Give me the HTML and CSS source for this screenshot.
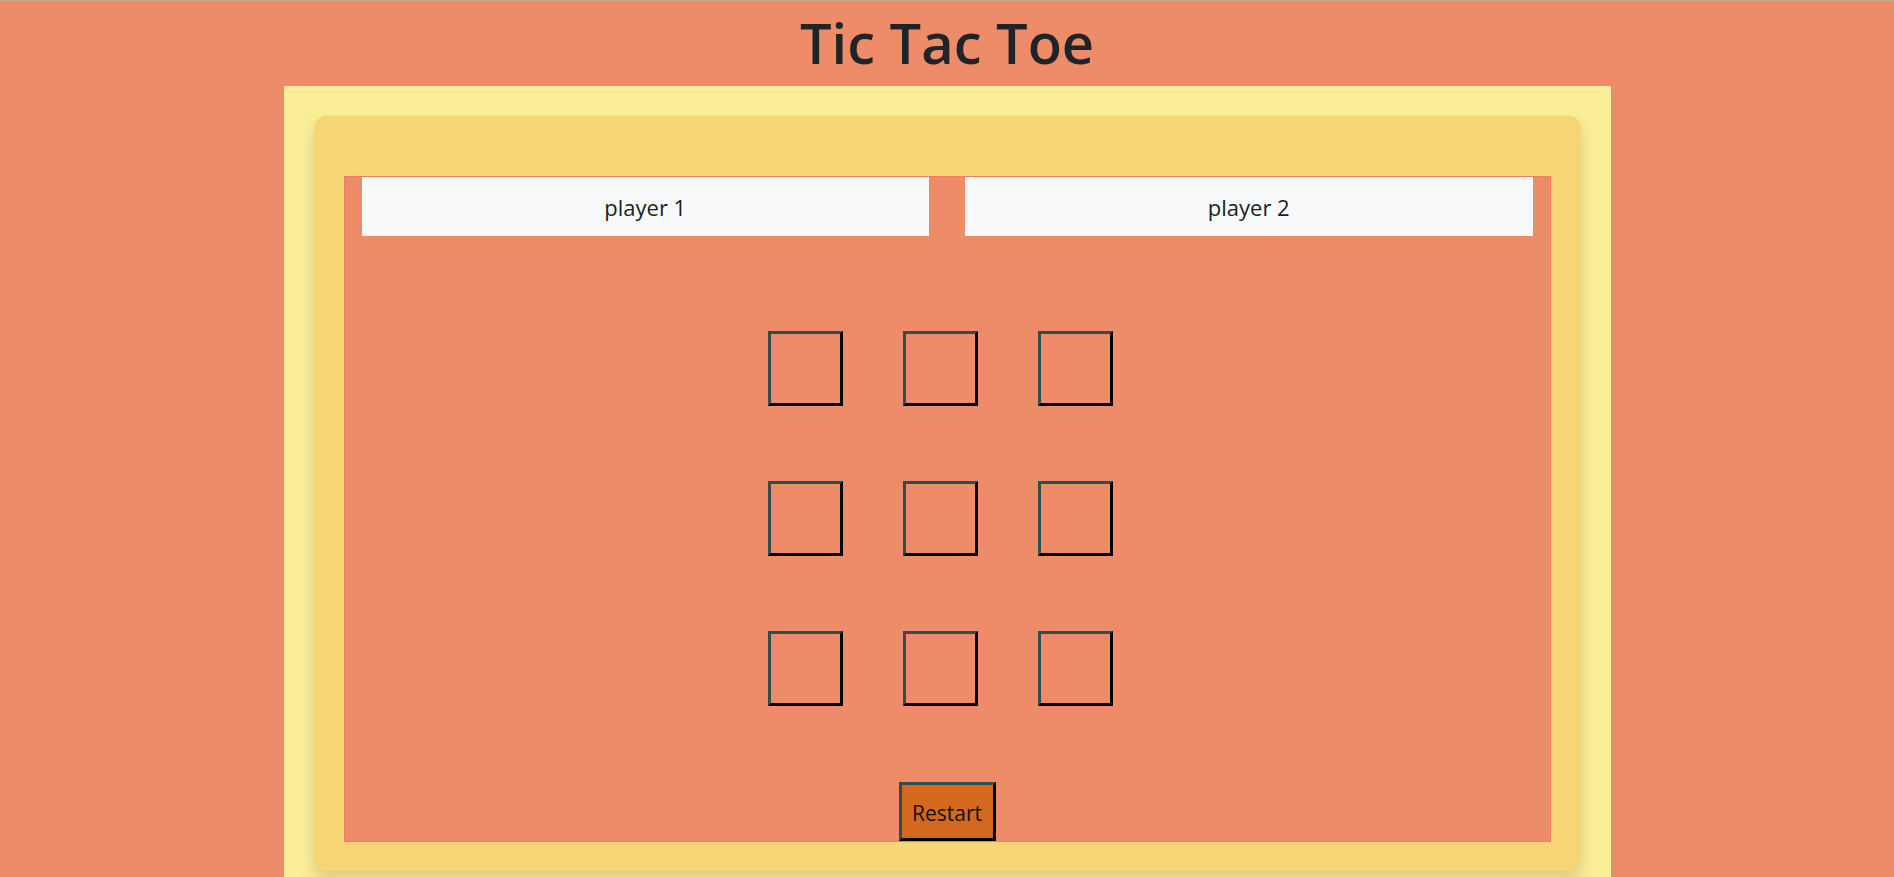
FILE: index.html
```html
<!DOCTYPE html>
<html lang="en">
<head>
<meta charset="utf-8">
<title>Tic Tac Toe</title>
<link rel="stylesheet" href="styles.css">
</head>
<body>
<h1 class="title">Tic Tac Toe</h1>
<div class="container">
  <div class="card">
    <div class="board">
      <div class="players">
        <div class="player">player 1</div>
        <div class="player">player 2</div>
      </div>
      <div class="grid">
        <div class="cell"></div><div class="cell"></div><div class="cell"></div>
        <div class="cell"></div><div class="cell"></div><div class="cell"></div>
        <div class="cell"></div><div class="cell"></div><div class="cell"></div>
      </div>
      <div class="actions">
        <button class="restart">Restart</button>
      </div>
    </div>
  </div>
</div>
</body>
</html>
```
FILE: styles.css
```css
html, body {
  margin: 0;
  padding: 0;
}
body {
  background: #ee8b68;
  border-top: 1px solid #c8a88c;
  font-family: "Open Sans", "Noto Sans", sans-serif;
  color: #212529;
  height: 876px;
  overflow: hidden;
}
.title {
  margin: 0;
  height: 85px;
  line-height: 82px;
  text-align: center;
  font-size: 56px;
  font-weight: 600;
  color: #1e242a;
}
.container {
  width: 1327px;
  margin: 0 auto;
  box-sizing: border-box;
  background: #faef98;
  padding: 30px 30px 40px;
}
.card {
  background: #f5d574;
  border-radius: 12px;
  padding: 60px 30px 29px;
  box-shadow: 0 .5rem 1rem rgba(0, 0, 0, .15);
}
.board {
  border: 1px solid #f27a66;
  background: #ee8b68;
}
.players {
  display: flex;
  gap: 36px;
  padding: 0 17px;
}
.player {
  flex: 1;
  height: 59px;
  background: #f8f9fa;
  display: flex;
  align-items: center;
  justify-content: center;
  font-size: 22px;
  color: #1a1e22;
}
.grid {
  display: grid;
  grid-template-columns: repeat(3, 75px);
  grid-auto-rows: 75px;
  column-gap: 60px;
  row-gap: 75px;
  margin: 95px 0 0 423px;
}
.cell {
  box-sizing: border-box;
  border: 3px outset #2f4f4f;
}
.actions {
  display: flex;
  justify-content: center;
  margin-top: 76px;
}
.restart {
  box-sizing: border-box;
  width: 97px;
  height: 59px;
  background: #d2691e;
  border: 3px outset #2f4f4f;
  font-family: "Open Sans", "Noto Sans", sans-serif;
  font-size: 21px;
  color: #111;
  padding: 2px 0 0;
}
```
